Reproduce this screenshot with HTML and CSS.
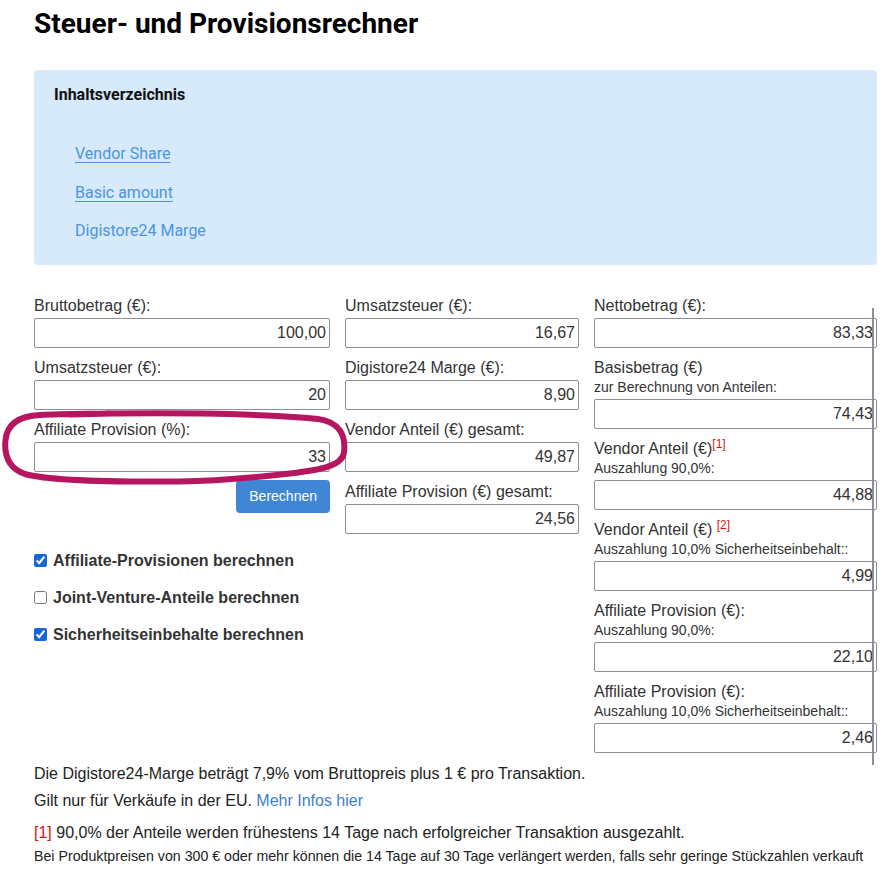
FILE: index.html
```html
<!DOCTYPE html>
<html lang="de">
<head>
    <meta charset="UTF-8">
    <title>Steuer- und Provisionsrechner</title>
    <link rel="stylesheet" href="styles.css">
</head>
<body>
<div class="page">
    <h1 class="title">Steuer- und Provisionsrechner</h1>

    <!--Inhaltsverzeichnis-->
    <div class="toc">
        <h2 class="toc-title">Inhaltsverzeichnis</h2>
        <ul class="toc-list">
            <li><a href="#vendor-share" class="u">Vendor Share</a></li>
            <li><a href="#basic-amount" class="u">Basic amount</a></li>
            <li><a href="#marge">Digistore24 Marge</a></li>
        </ul>
    </div>

    <!--Rechner-->
    <form class="calc">
        <div class="col col-1">
            <div class="field">
                <label class="field-label">Bruttobetrag (€):</label>
                <input class="num" type="text" value="100,00">
            </div>
            <div class="field">
                <label class="field-label">Umsatzsteuer (€):</label>
                <input class="num" type="text" value="20">
            </div>
            <div class="field">
                <label class="field-label">Affiliate Provision (%):</label>
                <input class="num" type="text" value="33">
            </div>
            <div class="actions">
                <button type="button" class="btn">Berechnen</button>
            </div>
            <div class="checks">
                <label class="check"><input type="checkbox" checked>Affiliate-Provisionen berechnen</label>
                <label class="check"><input type="checkbox">Joint-Venture-Anteile berechnen</label>
                <label class="check"><input type="checkbox" checked>Sicherheitseinbehalte berechnen</label>
            </div>
        </div>

        <div class="col col-2">
            <div class="field">
                <label class="field-label">Umsatzsteuer (€):</label>
                <input class="num" type="text" value="16,67" readonly>
            </div>
            <div class="field">
                <label class="field-label">Digistore24 Marge (€):</label>
                <input class="num" type="text" value="8,90" readonly>
            </div>
            <div class="field">
                <label class="field-label">Vendor Anteil (€) gesamt:</label>
                <input class="num" type="text" value="49,87" readonly>
            </div>
            <div class="field">
                <label class="field-label">Affiliate Provision (€) gesamt:</label>
                <input class="num" type="text" value="24,56" readonly>
            </div>
        </div>

        <div class="col col-3">
            <div class="field">
                <label class="field-label">Nettobetrag (€):</label>
                <input class="num" type="text" value="83,33" readonly>
            </div>
            <div class="field">
                <label class="field-label">Basisbetrag (€)<small class="sub">zur Berechnung von Anteilen:</small></label>
                <input class="num" type="text" value="74,43" readonly>
            </div>
            <div class="field">
                <label class="field-label">Vendor Anteil (€)<sup class="ref">[1]</sup><small class="sub">Auszahlung 90,0%:</small></label>
                <input class="num" type="text" value="44,88" readonly>
            </div>
            <div class="field">
                <label class="field-label">Vendor Anteil (€) <sup class="ref">[2]</sup><small class="sub">Auszahlung 10,0% Sicherheitseinbehalt::</small></label>
                <input class="num" type="text" value="4,99" readonly>
            </div>
            <div class="field">
                <label class="field-label">Affiliate Provision (€):<small class="sub">Auszahlung 90,0%:</small></label>
                <input class="num" type="text" value="22,10" readonly>
            </div>
            <div class="field">
                <label class="field-label">Affiliate Provision (€):<small class="sub">Auszahlung 10,0% Sicherheitseinbehalt::</small></label>
                <input class="num" type="text" value="2,46" readonly>
            </div>
        </div>

        <!--Markierung um das Provisionsfeld-->
        <svg class="mark" width="352" height="90" viewBox="0 0 352 90">
            <path d="M70 10.5 C150 8 260 9 318 15 C340 18 346 32 344 48 C343 62 320 66 290 69.5 C250 74 220 77 180 77.5 C120 78 50 77 25 70 C8 64 4 51 5.5 36 C7 21 18 12 40 11 C60 10 80 10 110 9.5"
                  fill="none" stroke="#b5165f" stroke-width="6" stroke-linecap="round" stroke-linejoin="round"/>
        </svg>
    </form>

    <!--Hinweise-->
    <div class="notes">
        <p class="gap-s">Die Digistore24-Marge beträgt 7,9% vom Bruttopreis plus 1 € pro Transaktion.</p>
        <p class="gap-l">Gilt nur für Verkäufe in der EU. <a href="#infos">Mehr Infos hier</a></p>
        <p><span class="ref-inline">[1]</span> 90,0% der Anteile werden frühestens 14 Tage nach erfolgreicher Transaktion ausgezahlt.</p>
        <p class="fine">Bei Produktpreisen von 300 € oder mehr können die 14 Tage auf 30 Tage verlängert werden, falls sehr geringe Stückzahlen verkauft</p>
    </div>
</div>
</body>
</html>
```

FILE: styles.css
```css
/**Grundlayout**/
*{
    box-sizing: border-box;
}
body{
    margin: 0;
    font-family: "Liberation Sans", Arial, sans-serif;
    color: #333;
    background-color: #fff;
}
.page{
    padding: 0 11px 0 34px;
}
.title{
    margin: 7px 0 29px;
    font: 700 28px/34px Roboto, "Liberation Sans", sans-serif;
    color: #000;
}
/**Inhaltsverzeichnis**/
.toc{
    padding: 15px 20px 14px;
    background-color: #d6eafc;
    border-radius: 4px;
}
.toc-title{
    margin: 0;
    font: 700 16px/20px Roboto, "Liberation Sans", sans-serif;
    color: #111;
}
.toc-list{
    list-style: none;
    margin: 30px 0 0;
    padding-left: 21px;
    font: 400 16px/38.5px Roboto, "Liberation Sans", sans-serif;
}
.toc-list a{
    color: #4d94e3;
    text-decoration: none;
}
.toc-list a.u{
    text-decoration: underline;
    text-underline-offset: 3px;
}
/**Rechner**/
.calc{
    position: relative;
    display: grid;
    grid-template-columns: 296px 234px 283px;
    column-gap: 15px;
    align-items: start;
    margin: 31px 0 0;
}
.col-3{
    position: relative;
}
.col-3:after{
    content: '';
    position: absolute;
    top: 12px;
    right: 3px;
    bottom: -12px;
    width: 2px;
    background-color: #8e8e99;
}
.field{
    margin-bottom: 10px;
}
.field:last-child{
    margin-bottom: 0;
}
.field-label{
    display: block;
    font-size: 16px;
    line-height: 20px;
}
.field-label .sub{
    display: block;
    font-size: 14px;
    line-height: 19px;
}
.ref{
    color: #e01010;
    font-size: 12px;
    line-height: 0;
}
.num{
    display: block;
    width: 100%;
    height: 30px;
    margin: 2px 0 0;
    padding: 0 3px;
    border: 1px solid #8d8d99;
    border-radius: 2px;
    font: 16px "Liberation Sans", Arial, sans-serif;
    color: #333;
    text-align: right;
    background-color: #fff;
}
.actions{
    margin-top: -2px;
    text-align: right;
}
.btn{
    height: 33px;
    padding: 0 13px;
    border: 0;
    border-radius: 4px;
    background-color: #3f86d5;
    font: 14px "Liberation Sans", Arial, sans-serif;
    color: #fff;
    cursor: pointer;
}
.checks{
    margin-top: 38px;
}
.check{
    display: flex;
    align-items: center;
    height: 20px;
    margin-bottom: 17px;
    font-weight: 700;
    font-size: 16px;
}
.check input{
    width: 13px;
    height: 13px;
    margin: 0 6px 0 0;
    accent-color: #1766d6;
}
.mark{
    position: absolute;
    left: -34px;
    top: 108px;
    pointer-events: none;
}
/**Hinweise**/
.notes{
    margin-top: 11px;
    color: #222;
}
.notes p{
    margin: 0;
    font-size: 16px;
    line-height: 20px;
}
.notes p.gap-s{
    margin-bottom: 7px;
}
.notes p.gap-l{
    margin-bottom: 12px;
}
.notes a{
    color: #3a7fd0;
    text-decoration: none;
}
.ref-inline{
    color: #e01010;
}
.notes p.fine{
    margin-top: 3px;
    font-size: 14.2px;
}
```
